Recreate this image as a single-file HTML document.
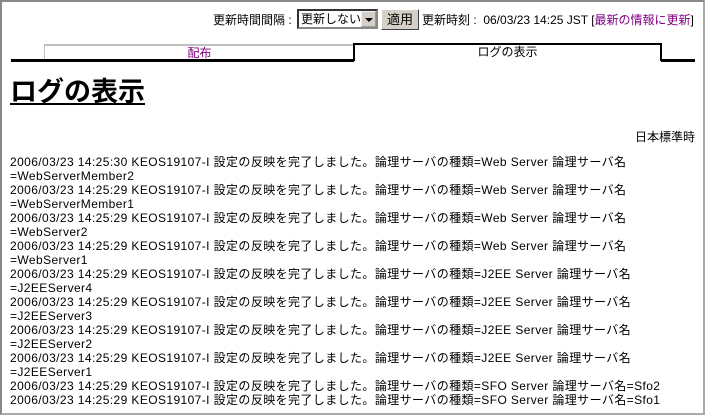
<!DOCTYPE html>
<html><head><meta charset="utf-8"><style>
*{margin:0;padding:0;box-sizing:border-box}
body{width:705px;height:415px;background:#fff;font-family:"Liberation Sans","Noto Sans CJK JP",sans-serif;font-size:12px;color:#000;position:relative;overflow:hidden}
.frame{position:absolute;left:0;top:0;width:705px;height:415px;border:2px solid #888;border-right-color:#aaa;border-bottom-color:#aaa}
.abs{position:absolute;white-space:nowrap}
a{color:#800080;text-decoration:none}
.sel{position:absolute;left:297px;top:9px;width:81px;height:20px;border:2px inset #888;background:#fff;font-size:12px;line-height:16px;padding-left:2px;overflow:hidden}
.sel .ar{position:absolute;right:0;top:0;width:15px;height:16px;background:#d4d0c8;border:1px outset #eee}
.sel .ar:after{content:"";position:absolute;left:3px;top:6px;border-left:4px solid transparent;border-right:4px solid transparent;border-top:4px solid #000}
.btn{position:absolute;left:381px;top:9px;width:38px;height:21px;background:#d4d0c8;border:1px solid;border-color:#fff #404040 #404040 #fff;font-size:13px;line-height:19px;text-align:center}
.log{position:absolute;left:10px;top:155px;line-height:14px;font-size:12px;white-space:nowrap;letter-spacing:0.4px}
</style></head><body>
<div class="frame"></div>
<div class="abs" style="left:213px;top:11px;font-size:12px">更新時間間隔 :</div>
<div class="sel">更新しない<span class="ar"></span></div>
<div class="btn">適用</div>
<div class="abs" style="left:422px;top:11px">更新時刻 :&nbsp; 06/03/23 14:25 JST [<a>最新の情報に更新</a>]</div>
<div class="abs" style="left:44px;top:44px;width:310px;height:16px;border-top:2px solid #c0c0c0;border-left:1px solid #c0c0c0;text-align:center;line-height:14px"><a>配布</a></div>
<div class="abs" style="left:353px;top:43px;width:309px;height:18px;border:2px solid #000;border-bottom:none;background:#fff;text-align:center;line-height:14px">ログの表示</div>
<div class="abs" style="left:11px;top:59px;width:343px;height:3px;background:#000"></div>
<div class="abs" style="left:661px;top:59px;width:34px;height:3px;background:#000"></div>
<div class="abs" style="left:10px;top:76px;font-size:27px;font-weight:bold;text-decoration:underline;line-height:32px">ログの表示</div>
<div class="abs" style="right:10px;top:128px">日本標準時</div>
<div class="log">2006/03/23 14:25:30 KEOS19107-I 設定の反映を完了しました。論理サーバの種類=Web Server 論理サーバ名<br>=WebServerMember2<br>2006/03/23 14:25:29 KEOS19107-I 設定の反映を完了しました。論理サーバの種類=Web Server 論理サーバ名<br>=WebServerMember1<br>2006/03/23 14:25:29 KEOS19107-I 設定の反映を完了しました。論理サーバの種類=Web Server 論理サーバ名<br>=WebServer2<br>2006/03/23 14:25:29 KEOS19107-I 設定の反映を完了しました。論理サーバの種類=Web Server 論理サーバ名<br>=WebServer1<br>2006/03/23 14:25:29 KEOS19107-I 設定の反映を完了しました。論理サーバの種類=J2EE Server 論理サーバ名<br>=J2EEServer4<br>2006/03/23 14:25:29 KEOS19107-I 設定の反映を完了しました。論理サーバの種類=J2EE Server 論理サーバ名<br>=J2EEServer3<br>2006/03/23 14:25:29 KEOS19107-I 設定の反映を完了しました。論理サーバの種類=J2EE Server 論理サーバ名<br>=J2EEServer2<br>2006/03/23 14:25:29 KEOS19107-I 設定の反映を完了しました。論理サーバの種類=J2EE Server 論理サーバ名<br>=J2EEServer1<br>2006/03/23 14:25:29 KEOS19107-I 設定の反映を完了しました。論理サーバの種類=SFO Server 論理サーバ名=Sfo2<br>2006/03/23 14:25:29 KEOS19107-I 設定の反映を完了しました。論理サーバの種類=SFO Server 論理サーバ名=Sfo1</div>
</body></html>
